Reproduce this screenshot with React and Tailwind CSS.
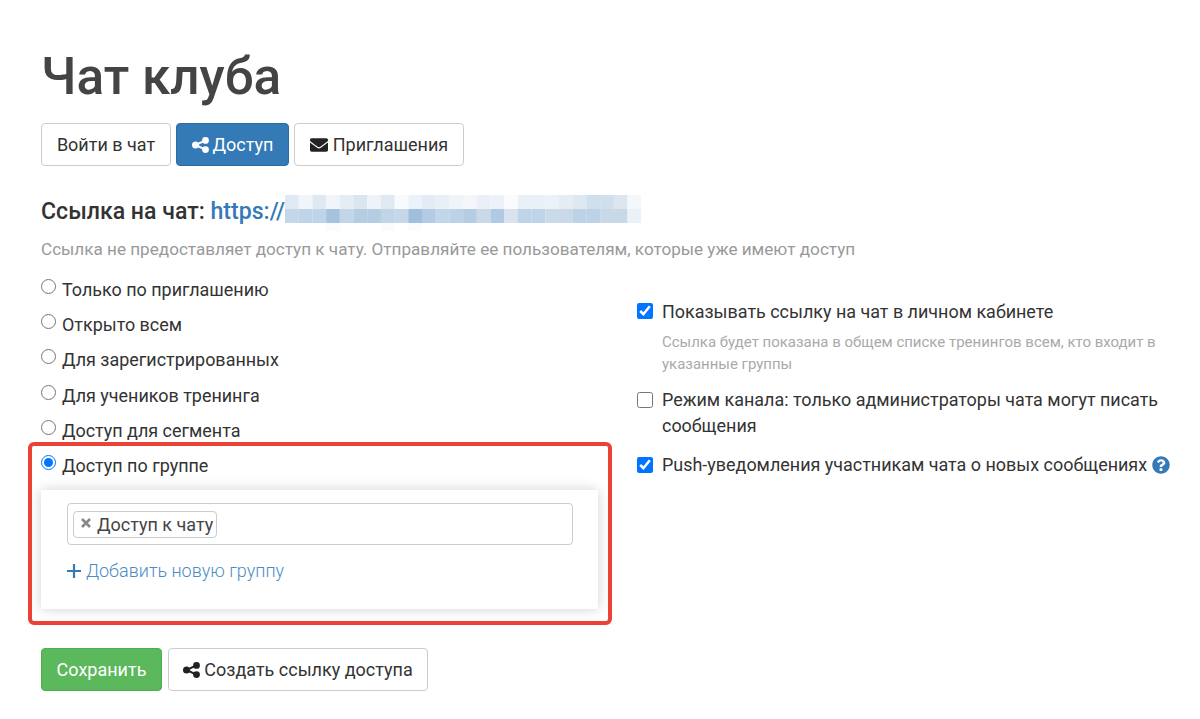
import React from "react";
import { FaEnvelope, FaQuestionCircle } from "react-icons/fa";

const rowA = ["dfe9f3","f0f5fa","e0e9f2","f0f5fa","e4ecf4","d9e5ef","eef3f9","e0e9f2","f8fbfd","ecf2f9","e4ebf4","e8eff5","eff4f8","f3f7fa","ebf0f8","edf2f8","f9fbfd","e9f0f8","e9f0f8","ebf1f8","e4ecf4","dee8f1","d0dfec","d0dfec","dde6ee","f4f8fb"];
const rowB = ["c3d7e9","bfd4e8","bfd4e8","a6c3dd","c3d6e7","b5cde3","b5cde3","c2d5e6","c5d7e8","9fbfdc","b3cbe3","c2d6e9","bcd2e7","b5cde3","c9d9e8","b0cae2","d8e3ef","bfd4e8","bfd4e8","cbdae9","c9d9e9","bdd2e7","bcd2e7","c8d8e7","c8d8e7","ebf1f9"];

function Blur() {
  return (
    <svg width="356" height="36" viewBox="0 0 356 36" className="shrink-0 block">
      {rowA.map((c, i) => <rect key={"a" + i} x={i * 13.7} y="0" width="13.8" height="14" fill={"#" + c} />)}
      {rowB.map((c, i) => <rect key={"b" + i} x={i * 13.7} y="14" width="13.8" height="14" fill={"#" + c} />)}
      {[3, 7, 9].map((i) => <rect key={"c" + i} x={i * 13.7} y="28" width="13.8" height="8" fill="#fafbfc" />)}
    </svg>
  );
}

const Share = ({ className = "" }) => (
  <svg viewBox="0 0 17 16" width="17" height="16" className={"shrink-0 " + className} fill="currentColor">
    <circle cx="13.5" cy="3.4" r="3.4" />
    <circle cx="3.5" cy="8" r="3.5" />
    <circle cx="13.5" cy="12.6" r="3.4" />
    <path d="M3.5 8L13.5 3.4M3.5 8l10 4.6" stroke="currentColor" strokeWidth="2" fill="none" />
  </svg>
);

const Btn = ({ className = "", children }) => (
  <button className={"h-[43px] rounded-[4px] border text-[18px] flex items-center justify-center " + className}>{children}</button>
);

const Radio = ({ label, checked }) => (
  <label className="flex h-[35.2px] items-start">
    <input type="radio" name="access" defaultChecked={checked} className="w-[15px] h-[15px] mt-[1px] shrink-0" />
    <span className="ml-[6px] text-[17.95px] leading-[25px] mt-[-1px]">{label}</span>
  </label>
);

export default function App() {
  return (
    <div className="relative w-[1200px] h-[719px] overflow-hidden bg-white px-[41px] pt-[40px] text-[#333] font-['Roboto',sans-serif]">
      <h1 className="text-[51.3px] leading-[74px] font-medium text-[#444]">Чат клуба</h1>

      <div className="flex gap-[5px] mt-[9px]">
        <Btn className="w-[130px] bg-white border-[#ccc]">Войти в чат</Btn>
        <Btn className="w-[113px] bg-[#337ab7] border-[#2e6da4] text-white gap-[4px]">
          <Share />Доступ
        </Btn>
        <Btn className="w-[170px] bg-white border-[#ccc] gap-[5px]">
          <FaEnvelope className="w-[18px] h-[18px] text-[#222]" />Приглашения
        </Btn>
      </div>

      <div className="flex items-start mt-[29px] h-[36px]">
        <div className="text-[23.1px] leading-[30px] font-medium mt-[2px]">
          Ссылка на чат: <span className="text-[#337ab7]">https://</span>
        </div>
        <Blur />
      </div>

      <p className="text-[17.13px] leading-[24px] text-[#999] mt-[6px] whitespace-nowrap">
        Ссылка не предоставляет доступ к чату. Отправляйте ее пользователям, которые уже имеют доступ
      </p>

      <div className="flex mt-[17px]">
        <div className="w-[557px] shrink-0">
          <Radio label="Только по приглашению" />
          <Radio label="Открыто всем" />
          <Radio label="Для зарегистрированных" />
          <Radio label="Для учеников тренинга" />
          <Radio label="Доступ для сегмента" />
          <Radio label="Доступ по группе" checked />

          <div className="bg-white h-[119px] mt-[1px] shadow-[0_0_12px_rgba(0,0,0,0.18)] pl-[26px] pr-[25px] pt-[13px]">
            <div className="h-[42px] border border-[#ccc] rounded-[4px] flex items-center pl-[5px]">
              <span className="h-[27px] border border-[#ccc] rounded-[4px] flex items-center pl-[7px] pr-[3px] text-[18px] text-[#444] bg-white">
                <svg width="10" height="10" viewBox="0 0 10 10" className="mr-[6px] mt-[-3px] shrink-0">
                  <path d="M1 1l8 8M9 1l-8 8" stroke="#888" strokeWidth="2.6" />
                </svg>
                Доступ к чату
              </span>
            </div>
            <a className="flex items-center mt-[14px] text-[18px] leading-[24px] text-[#4a8cc4] font-light">
              <svg width="14" height="14" viewBox="0 0 14 14" className="mr-[5px] shrink-0">
                <path d="M7 0v14M0 7h14" stroke="#337ab7" strokeWidth="2.2" />
              </svg>
              Добавить новую группу
            </a>
          </div>

          <div className="flex gap-[6px] mt-[39px]">
            <Btn className="w-[121px] bg-[#5cb85c] border-[#4cae4c] text-white">Сохранить</Btn>
            <Btn className="w-[260px] bg-white border-[#ccc] gap-[4px]">
              <Share className="text-[#222]" />Создать ссылку доступа
            </Btn>
          </div>
        </div>

        <div className="ml-[39px] w-[523px] pt-[21px]">
          <label className="flex items-start">
            <input type="checkbox" defaultChecked className="w-[16px] h-[16px] mt-[4px] shrink-0" />
            <span className="ml-[9px] text-[17.95px] leading-[26px]">Показывать ссылку на чат в личном кабинете</span>
          </label>
          <p className="ml-[25px] mt-[6px] text-[14.97px] leading-[22px] text-[#aaa]">
            Ссылка будет показана в общем списке тренингов всем, кто входит в указанные группы
          </p>
          <label className="flex items-start mt-[12px]">
            <input type="checkbox" className="w-[16px] h-[16px] mt-[5px] shrink-0" />
            <span className="ml-[9px] text-[17.95px] leading-[26px]">Режим канала: только администраторы чата могут писать сообщения</span>
          </label>
          <label className="flex items-start mt-[13px]">
            <input type="checkbox" defaultChecked className="w-[16px] h-[16px] mt-[5px] shrink-0" />
            <span className="ml-[9px] text-[17.95px] leading-[26px] whitespace-nowrap flex items-center gap-[5px]">
              Push-уведомления участникам чата о новых сообщениях
              <FaQuestionCircle className="w-[18px] h-[18px] text-[#337ab7]" />
            </span>
          </label>
        </div>
      </div>

      <div className="absolute left-[28px] top-[442px] w-[584px] h-[183px] border-[4px] border-[#ea4335] rounded-[6px] pointer-events-none" />
    </div>
  );
}
